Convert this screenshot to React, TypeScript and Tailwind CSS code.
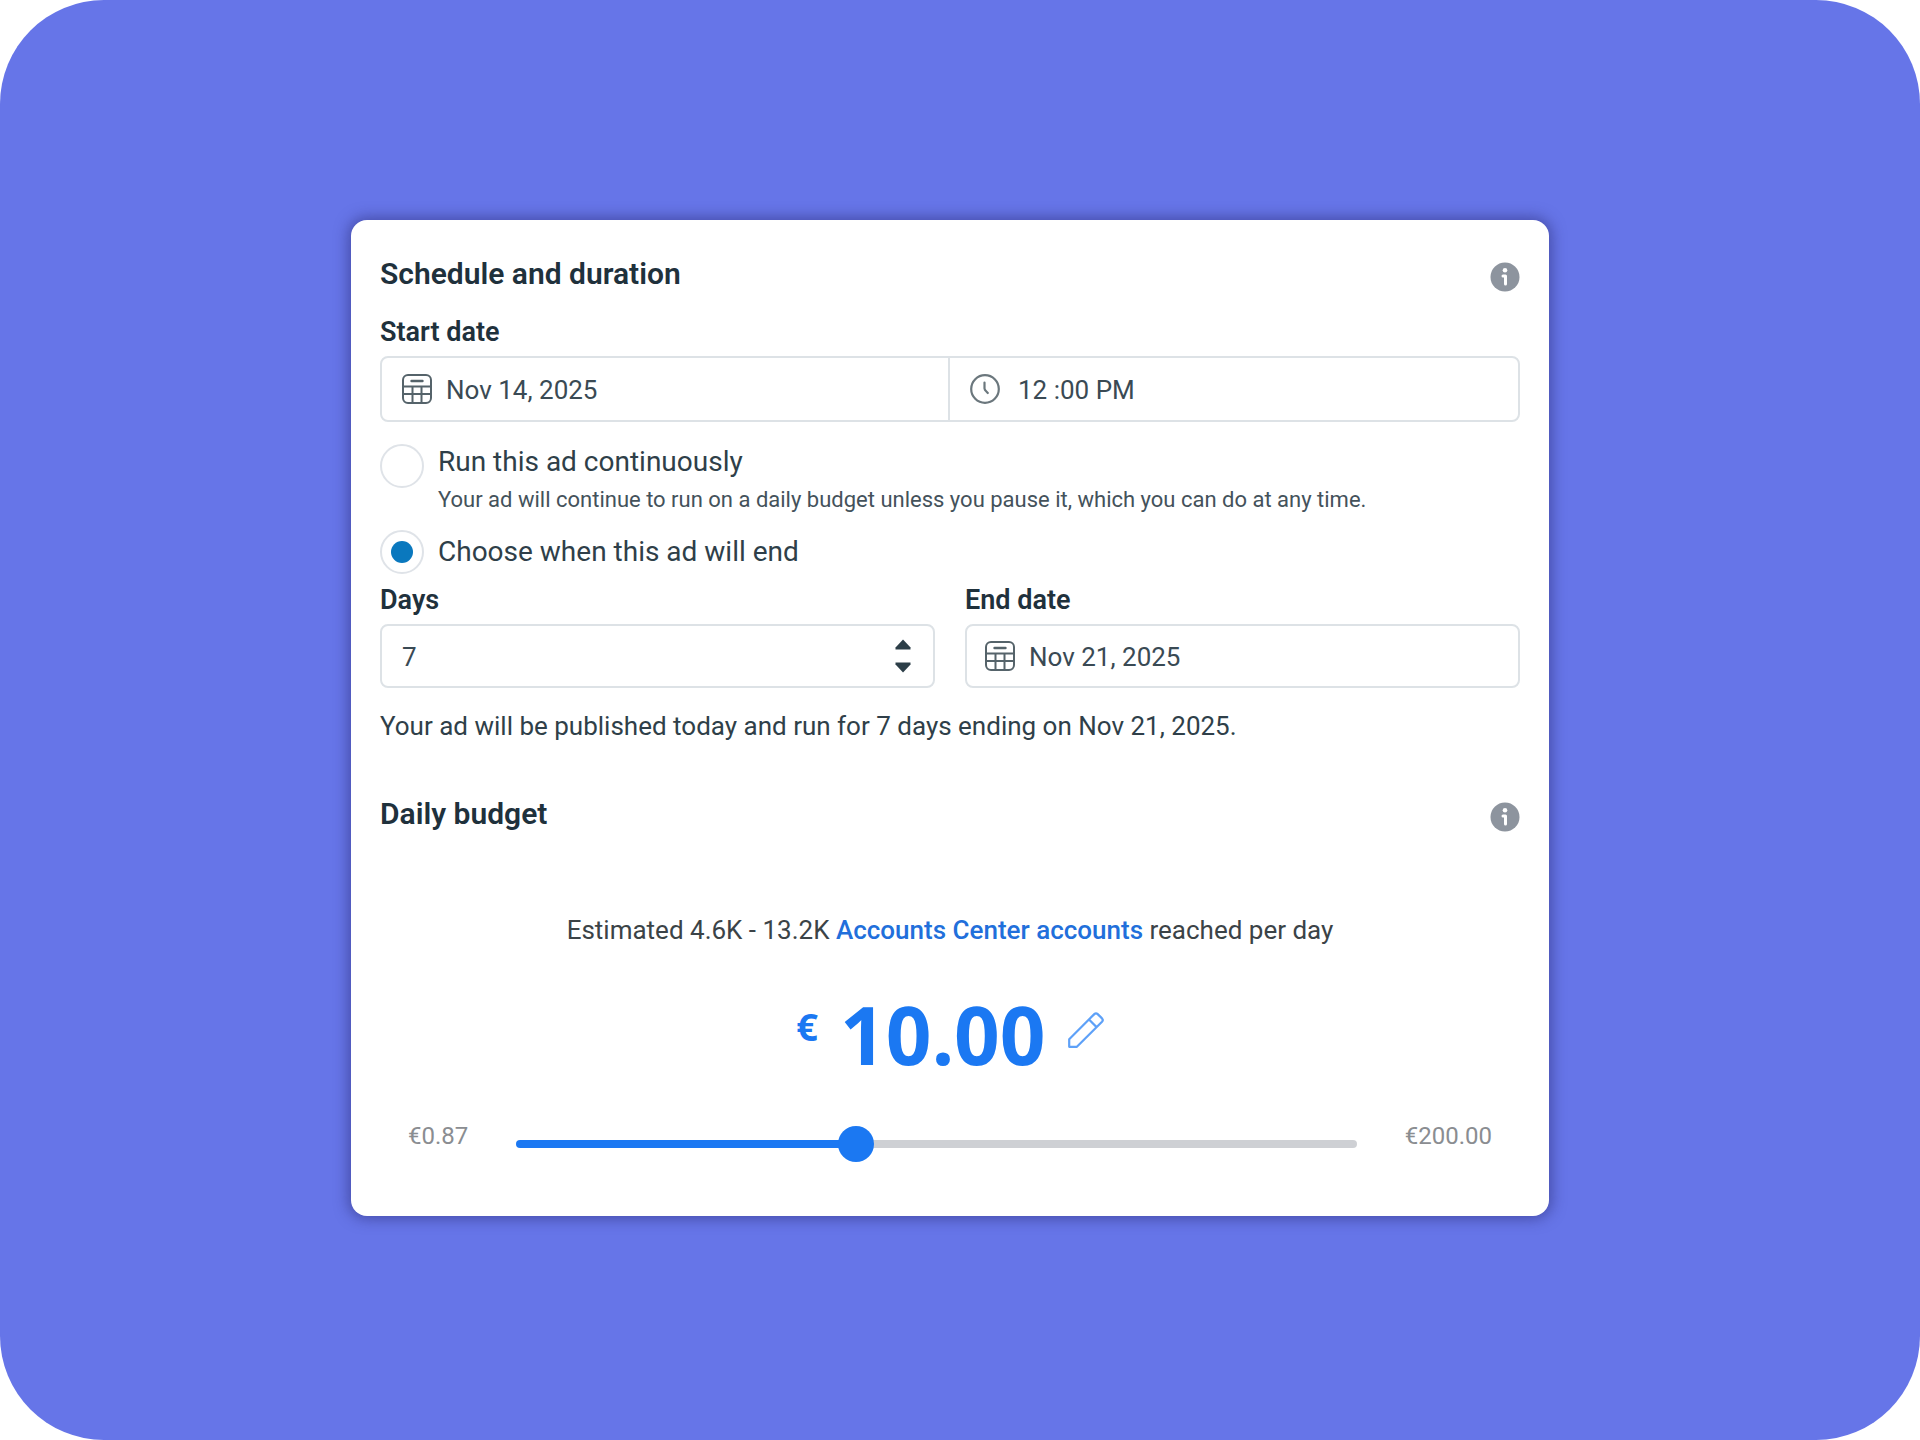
import { useState } from 'react';

function InfoButton({ label }: { label: string }) {
  return (
    <button type="button" aria-label={label} className="size-[30px] shrink-0">
      <svg viewBox="0 0 30 30" className="size-full">
        <circle cx="15" cy="15" r="14.5" fill="#8d949e" />
        <circle cx="15" cy="8.2" r="2.3" fill="#fff" />
        <path d="M13 14h2.500v8" fill="none" stroke="#fff" strokeWidth="3" strokeLinecap="round" strokeLinejoin="round" />
      </svg>
    </button>
  );
}

function CalendarIcon() {
  return (
    <svg viewBox="0 0 30 30" className="size-[30px] shrink-0" fill="none" stroke="#55636a" strokeWidth="2">
      <rect x="1" y="1" width="28" height="28" rx="5" />
      <path d="M1 12.5h28M1 20h28M10.5 12.5V29M19.5 12.5V29" />
      <path d="M9.5 7h11" strokeWidth="2.4" strokeLinecap="round" />
    </svg>
  );
}

function ClockIcon() {
  return (
    <svg viewBox="0 0 30 30" className="size-[30px] shrink-0" fill="none" stroke="#6b777d" strokeWidth="2.2">
      <circle cx="15" cy="15" r="13.8" />
      <path d="M14.5 8.5v6c0 1.800 2 3 3.300 4.500" strokeLinecap="round" />
    </svg>
  );
}

function PencilIcon() {
  return (
    <svg viewBox="0 0 36 36" className="size-9" fill="none" stroke="#5ea1f8" strokeWidth="2.2" strokeLinejoin="round">
      <path d="M1.200 34.800v-7.600L26.300 2.100q1.700-1.600 3.400 0l4.300 4.300q1.600 1.700 0 3.400L8.900 34.800z" />
      <path d="M21 7.500l7.600 7.600" />
    </svg>
  );
}

const fieldText = 'min-w-0 flex-1 bg-transparent pt-0.5 text-[26px] text-[#3a4a54] outline-none';
const labelText = 'block text-[27px] leading-8 font-semibold text-[#1f313c]';
const radioDot =
  'grid size-11 shrink-0 appearance-none place-content-center rounded-full border-2 border-[#dfe3e8] before:size-[22px] before:rounded-full checked:before:bg-[#0a78be]';

function ScheduleSection() {
  const [continuous, setContinuous] = useState(false);
  const [days, setDays] = useState(7);

  return (
    <section>
      <header className="flex items-end justify-between">
        <h2 className="text-[30px] leading-9 font-semibold text-[#1f313c]">Schedule and duration</h2>
        <InfoButton label="About schedule and duration" />
      </header>

      <label htmlFor="start-date" className={`${labelText} mt-6`}>Start date</label>
      <div className="mt-2 grid h-[66px] grid-cols-2 rounded-lg border-2 border-[#dde2e6]">
        <div className="flex items-center gap-3.5 border-r-2 border-[#dde2e6] px-5">
          <CalendarIcon />
          <input id="start-date" defaultValue="Nov 14, 2025" className={fieldText} />
        </div>
        <div className="flex items-center gap-[18px] px-5">
          <ClockIcon />
          <input aria-label="Start time" defaultValue="12 :00 PM" className={fieldText} />
        </div>
      </div>

      {/* End mode */}
      <div className="mt-[22px] flex gap-3.5">
        <input
          type="radio"
          id="run-continuous"
          name="end-mode"
          checked={continuous}
          onChange={() => setContinuous(true)}
          className={radioDot}
        />
        <div>
          <label htmlFor="run-continuous" className="block text-[28px] leading-9 text-[#2f3f49]">Run this ad continuously</label>
          <p className="mt-1.5 text-[22px] leading-7 text-[#44525b]">
            Your ad will continue to run on a daily budget unless you pause it, which you can do at any time.
          </p>
        </div>
      </div>
      <div className="mt-4 flex items-center gap-3.5">
        <input
          type="radio"
          id="run-until"
          name="end-mode"
          checked={!continuous}
          onChange={() => setContinuous(false)}
          className={radioDot}
        />
        <label htmlFor="run-until" className="text-[28px] leading-9 text-[#2f3f49]">Choose when this ad will end</label>
      </div>

      <div className="mt-2.5 grid grid-cols-2 gap-[30px]">
        <div>
          <label htmlFor="days" className={labelText}>Days</label>
          <div className="mt-2 flex h-16 items-center rounded-lg border-2 border-[#dde2e6] px-5">
            <input
              id="days"
              inputMode="numeric"
              value={days}
              onChange={(e) => setDays(Number(e.target.value) || 1)}
              className={fieldText}
            />
            <div className="flex flex-col gap-3 pr-0.5">
              <button type="button" aria-label="More days" onClick={() => setDays(days + 1)}>
                <svg viewBox="0 0 16 11" className="h-[11px] w-4" fill="#2c3e48">
                  <path d="M8 0.500L15.500 8.500v2H0.500v-2z" />
                </svg>
              </button>
              <button type="button" aria-label="Fewer days" onClick={() => setDays(Math.max(1, days - 1))}>
                <svg viewBox="0 0 16 11" className="h-[11px] w-4" fill="#2c3e48">
                  <path d="M8 10.500L15.500 2.500v-2H0.500v2z" />
                </svg>
              </button>
            </div>
          </div>
        </div>
        <div>
          <label htmlFor="end-date" className={labelText}>End date</label>
          <div className="mt-2 flex h-16 items-center gap-3.5 rounded-lg border-2 border-[#dde2e6] px-[18px]">
            <CalendarIcon />
            <input id="end-date" defaultValue="Nov 21, 2025" className={fieldText} />
          </div>
        </div>
      </div>

      <p className="mt-5 text-[26px] leading-9 text-[#2f3f49]">
        Your ad will be published today and run for {days} days ending on Nov 21, 2025.
      </p>
    </section>
  );
}

function BudgetSection() {
  // slider position in percent of the track, not the amount itself
  const [position, setPosition] = useState(40);

  return (
    <section className="mt-[52px]">
      <header className="flex items-end justify-between">
        <h2 className="text-[30px] leading-9 font-semibold text-[#1f313c]">Daily budget</h2>
        <InfoButton label="About daily budget" />
      </header>

      <p className="mt-20 text-center text-[26px] leading-9 text-[#3b4347]">
        Estimated 4.6K - 13.2K{' '}
        <a href="#accounts" className="font-medium text-[#216fdb]">Accounts Center accounts</a> reached per day
      </p>

      <div className="mt-11 flex items-center justify-center gap-[22px] text-[#1b78f2]">
        <span className="pb-4 font-['Noto_Sans',sans-serif] text-[38px] leading-10 font-bold">€</span>
        <span className="font-['Noto_Sans',sans-serif] text-[80px] leading-[84px] font-bold">10.00</span>
        <button type="button" aria-label="Edit budget" className="pb-2">
          <PencilIcon />
        </button>
      </div>

      <div className="mt-[46px] flex items-center justify-between gap-12 px-7">
        <span className="pb-4 text-[24px] leading-7 text-[#8a8d91]">€0.87</span>
        <input
          type="range"
          aria-label="Daily budget"
          value={position}
          onChange={(e) => setPosition(Number(e.target.value))}
          className="h-2 min-w-0 flex-1 appearance-none rounded-full [&::-webkit-slider-thumb]:size-9 [&::-webkit-slider-thumb]:appearance-none [&::-webkit-slider-thumb]:rounded-full [&::-webkit-slider-thumb]:bg-[#1b78f2]"
          style={{ background: `linear-gradient(to right, #1b78f2 ${position}%, #ced0d4 ${position}%)` }}
        />
        <span className="pb-4 text-[24px] leading-7 text-[#8a8d91]">€200.00</span>
      </div>
    </section>
  );
}

export default function App() {
  return (
    <div className="bg-white font-['Roboto',sans-serif]">
      <main className="flex min-h-screen items-center justify-center rounded-[104px] bg-[#6675e8] pr-5 pb-1">
        <div className="w-full max-w-[1198px] rounded-2xl bg-white px-[29px] pt-9 pb-[50px] shadow-[0_0_14px_3px_rgba(40,40,110,0.5)]">
          <ScheduleSection />
          <BudgetSection />
        </div>
      </main>
    </div>
  );
}
